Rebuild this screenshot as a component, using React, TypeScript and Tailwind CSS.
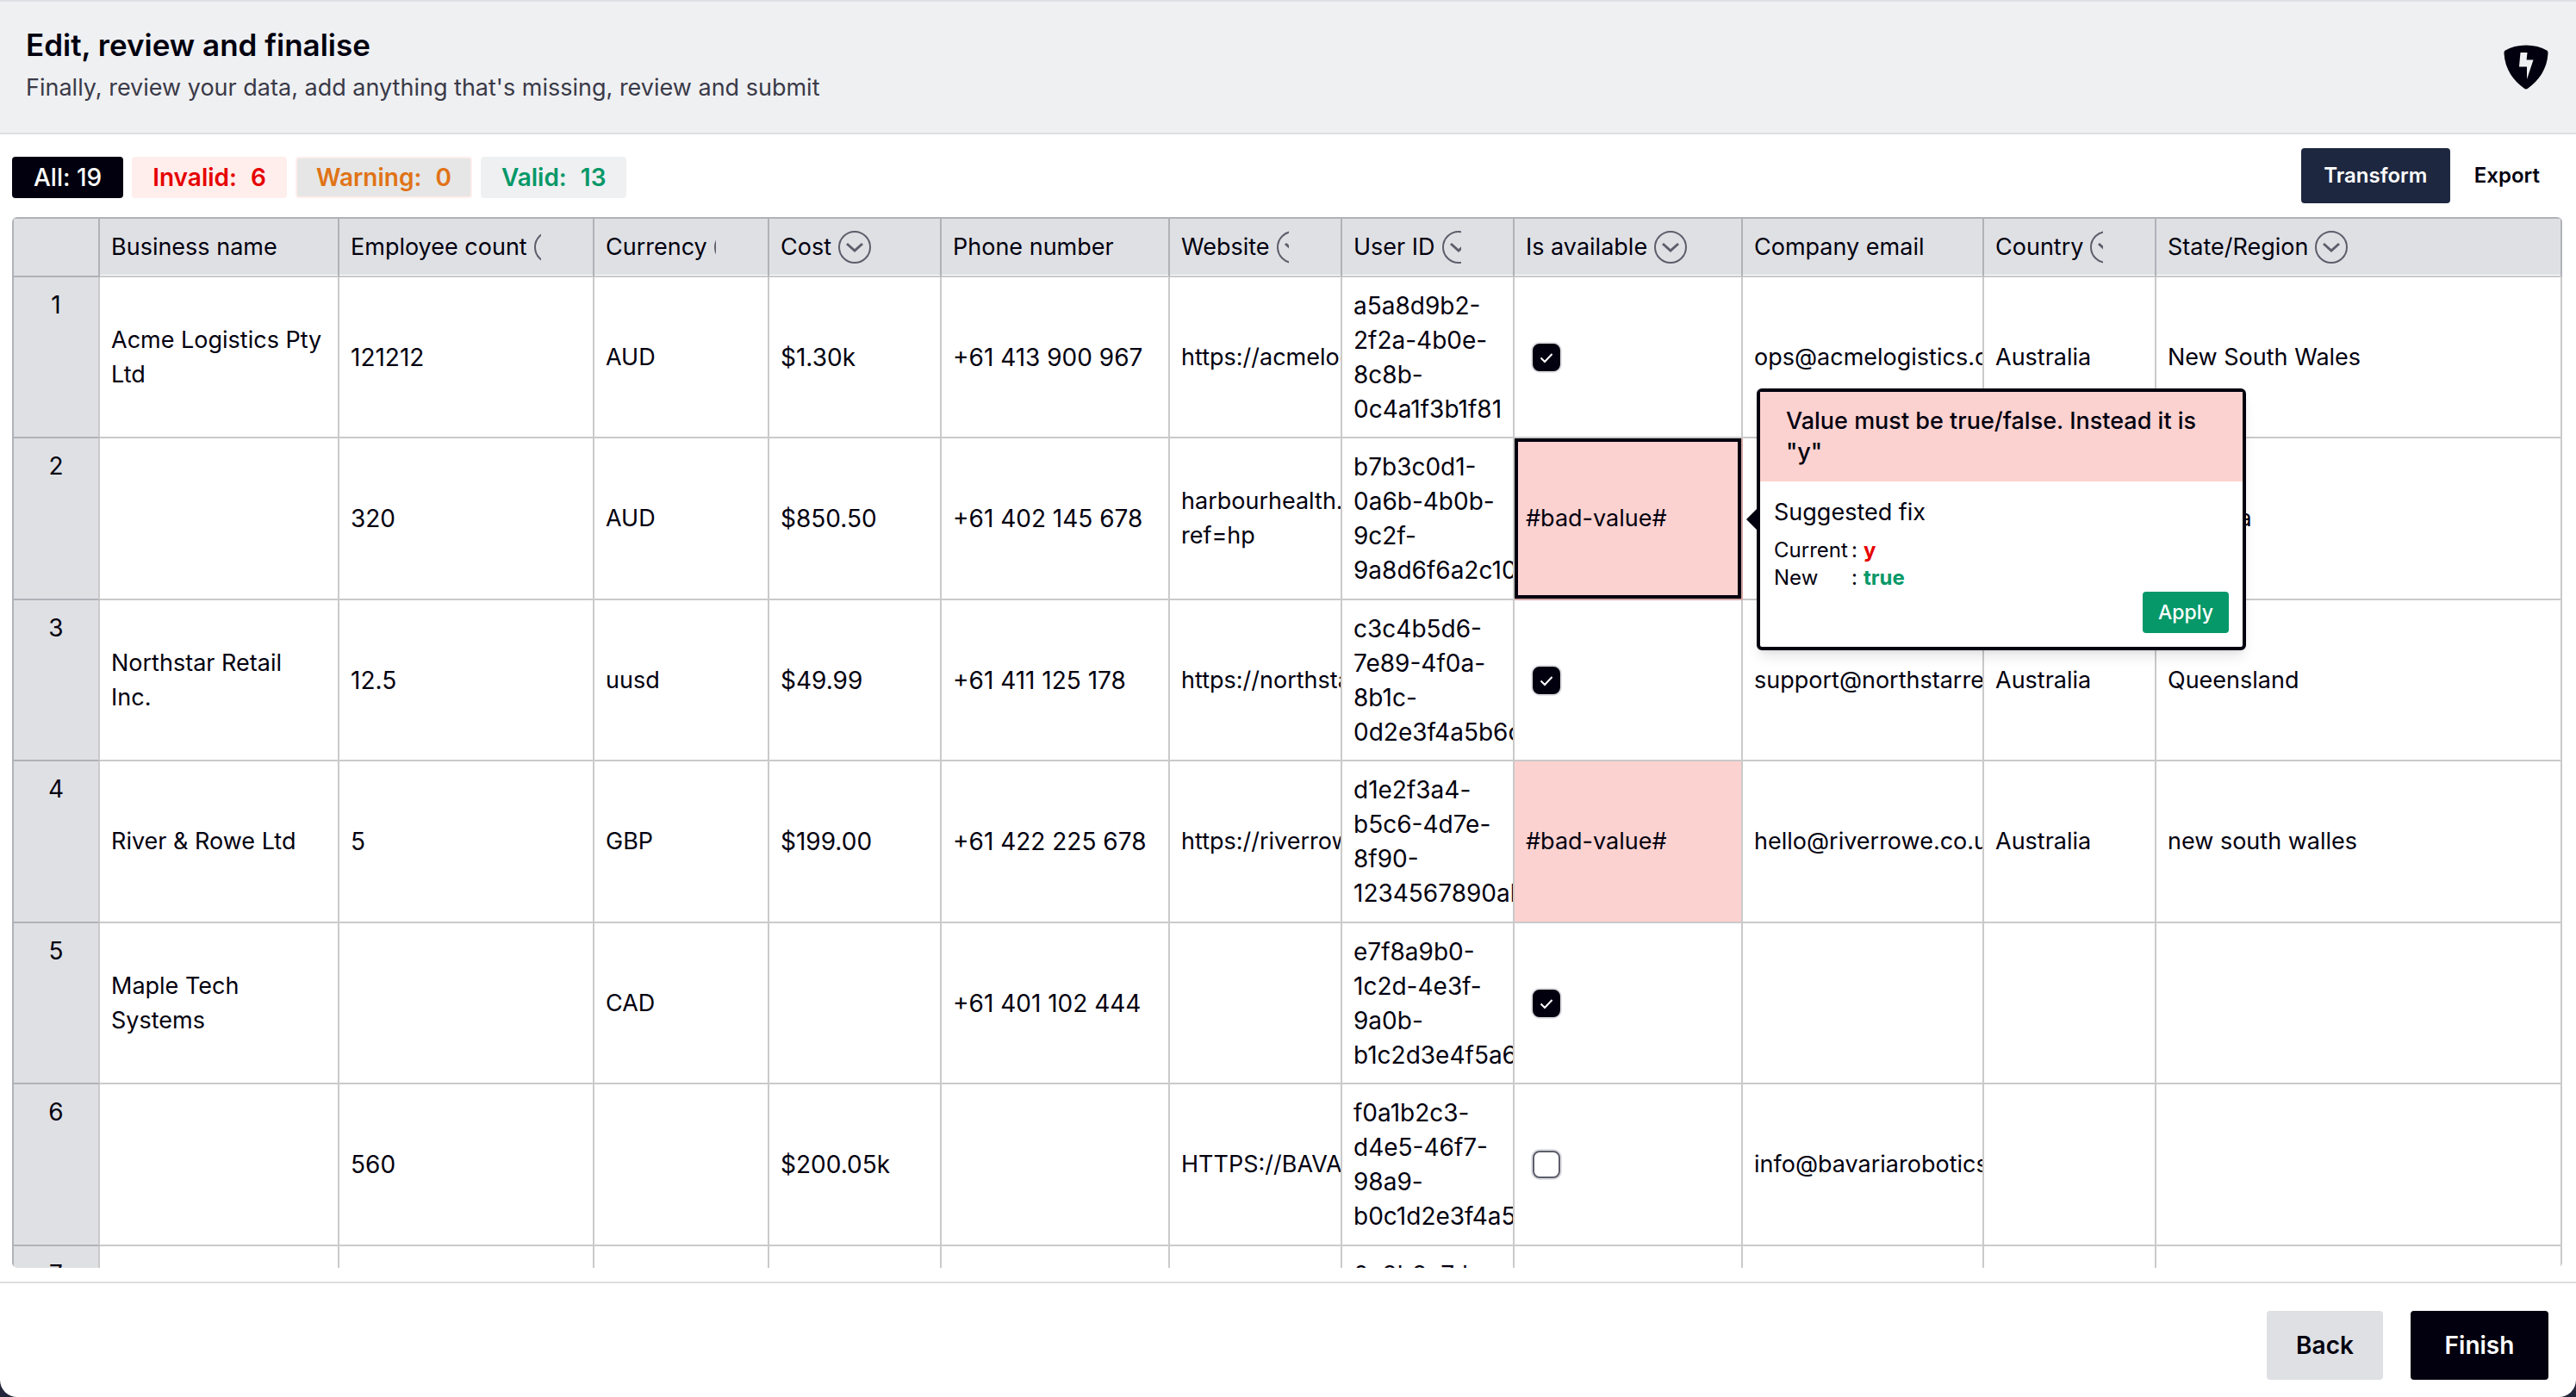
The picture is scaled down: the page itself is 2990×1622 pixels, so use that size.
import React from "react";

type Cell = string | boolean | null;

const columns = [
  { label: "Business name", menu: false, width: "w-[278px]", text: "text-[27px]" },
  { label: "Employee count", menu: true, width: "w-[296px]", text: "text-[28px]" },
  { label: "Currency", menu: true, width: "w-[203px]", text: "text-[27px]" },
  { label: "Cost", menu: true, width: "w-[200px]", text: "text-[28px]" },
  { label: "Phone number", menu: false, width: "w-[265px]", text: "text-[28px]" },
  { label: "Website", menu: true, width: "w-[200px]", text: "text-[27px]" },
  { label: "User ID", menu: true, width: "w-[200px]", text: "text-[28px]" },
  { label: "Is available", menu: true, width: "w-[265px]", text: "text-[27px]" },
  { label: "Company email", menu: false, width: "w-[280px]", text: "text-[27px]" },
  { label: "Country", menu: true, width: "w-[200px]", text: "text-[27px]" },
  { label: "State/Region", menu: true, width: "", text: "text-[27px]" },
];

const BAD = "#bad-value#";

const rows: Cell[][] = [
  ["Acme Logistics Pty Ltd", "121212", "AUD", "$1.30k", "+61 413 900 967", "https://acmelogistics.com", "a5a8d9b2-2f2a-4b0e-8c8b-0c4a1f3b1f81", true, "ops@acmelogistics.com", "Australia", "New South Wales"],
  ["", "320", "AUD", "$850.50", "+61 402 145 678", "harbourhealth.com ref=hp", "b7b3c0d1-0a6b-4b0b-9c2f-9a8d6f6a2c10", BAD, "", "", "Victoria"],
  ["Northstar Retail Inc.", "12.5", "uusd", "$49.99", "+61 411 125 178", "https://northstar.com", "c3c4b5d6-7e89-4f0a-8b1c-0d2e3f4a5b6c", true, "support@northstarretail.com", "Australia", "Queensland"],
  ["River & Rowe Ltd", "5", "GBP", "$199.00", "+61 422 225 678", "https://riverrowe.co.uk", "d1e2f3a4-b5c6-4d7e-8f90-1234567890ab", BAD, "hello@riverrowe.co.uk", "Australia", "new south walles"],
  ["Maple Tech Systems", "", "CAD", "", "+61 401 102 444", "", "e7f8a9b0-1c2d-4e3f-9a0b-b1c2d3e4f5a6", true, "", "", ""],
  ["", "560", "", "$200.05k", "", "HTTPS://BAVARIA.DE", "f0a1b2c3-d4e5-46f7-98a9-b0c1d2e3f4a5", false, "info@bavariarobotics.de", "", ""],
  ["", "", "", "", "", "", "0a9b8c7d-6e5f-4a3b-2c1d-0e9f8a7b6c5d", null, "", "", ""],
];

// row / column of the cell that has its popover open
const selected = { row: 1, col: 7 };

const ShieldLogo: React.FC = () => (
  <svg viewBox="0 0 52 52" className="mt-6 size-13" aria-label="Logo">
    <path
      fill="#02000f"
      d="M1.500 6.800Q12 .500 26 .500T50.500 6.800Q51.700 7.500 51.500 10C50.500 28 41 41.500 28 50.800Q26 52 24 50.800C11 41.500 1.500 28 .500 10Q.300 7.500 1.500 6.800Z"
    />
    <path fill="#eff0f2" d="M19.500 9h8L26.600 17.500H34.500L27 40V25.500H18z" />
  </svg>
);

const MenuIcon: React.FC = () => (
  <svg viewBox="0 0 38 38" fill="none" stroke="#5d5d6b" className="size-[38px]">
    <circle cx="19" cy="19" r="18" strokeWidth="2" />
    <path d="M10 15l9 8 9-8" strokeWidth="3" />
  </svg>
);

const FixPopover: React.FC = () => (
  <div className="absolute left-full -top-[58px] z-10 ml-[18px] w-[568px] rounded-md border-4 border-[#02000f] bg-white shadow-lg">
    <svg viewBox="0 0 13 26" className="absolute -left-4 top-[135px] h-[26px] w-[13px]">
      <path d="M13 0L0 13l13 13z" fill="#02000f" />
    </svg>
    <p className="bg-[#fcd2d0] py-4 pr-8 pl-[30px] text-[27px] leading-9 font-medium">
      Value must be true/false. Instead it is "y"
    </p>
    <div className="p-4">
      <h2 className="text-[27px] leading-10">Suggested fix</h2>
      <dl className="mt-2 grid grid-cols-[90px_14px_1fr] text-2xl leading-8">
        <dt>Current</dt>
        <dd>:</dd>
        <dd className="font-bold text-[#e60000]">y</dd>
        <dt>New</dt>
        <dd>:</dd>
        <dd className="font-bold text-[#069868]">true</dd>
      </dl>
      <div className="flex justify-end">
        <button className="h-12 w-[100px] rounded bg-[#069868] text-[23px] font-medium text-white">
          Apply
        </button>
      </div>
    </div>
  </div>
);

const Checkbox: React.FC<{ checked: boolean; label: string }> = ({ checked, label }) => (
  <span className="relative my-1 ml-2 block size-8">
    <input
      type="checkbox"
      defaultChecked={checked}
      aria-label={label}
      className="peer block size-8 appearance-none rounded-lg border-2 border-[#5d5d6b] bg-white ring-2 ring-[#dfe0e4] checked:border-[#02000f] checked:bg-[#02000f]"
    />
    <svg
      viewBox="0 0 32 32"
      fill="none"
      stroke="white"
      strokeWidth="2"
      className="pointer-events-none absolute inset-0 hidden peer-checked:block"
    >
      <path d="M9.500 16.500l4.500 4.500L22.500 12" />
    </svg>
  </span>
);

const App: React.FC = () => {
  return (
    <div className="h-screen bg-[#23263a]">
      <div className="flex h-full flex-col overflow-hidden rounded-b-[20px] bg-white font-[Inter,sans-serif] text-[#02000f]">
        <header className="flex items-start justify-between border-y-2 border-[#dfe0e4] bg-[#eff0f2] pt-[26px] pr-8 pb-8 pl-[30px]">
          <div>
            <h1 className="text-[35px] leading-12 font-semibold">Edit, review and finalise</h1>
            <p className="mt-[6px] text-[27px] leading-10 text-[#3a3a48]">
              Finally, review your data, add anything that's missing, review and submit
            </p>
          </div>
          <ShieldLogo />
        </header>

        <div className="flex items-start justify-between px-[14px] py-4">
          <div className="flex gap-[10px] pt-[10px] text-[28px] font-semibold">
            <button className="h-12 rounded bg-[#02000f] px-[25px] font-medium text-white">All: 19</button>
            <button className="flex h-12 items-center gap-4 rounded bg-[#ffeeeb] px-6 text-[#e60000]">
              <span>Invalid:</span>
              <span>6</span>
            </button>
            <button className="flex h-12 items-center gap-4 rounded border-2 border-[#ffeeeb] bg-[#e6e6e6] px-[22px] text-[#e07316]">
              <span>Warning:</span>
              <span>0</span>
            </button>
            <button className="flex h-12 items-center gap-4 rounded bg-[#eff0f2] px-6 text-[#069868]">
              <span>Valid:</span>
              <span>13</span>
            </button>
          </div>
          <div className="flex text-2xl font-semibold">
            <button className="h-16 w-[173px] rounded bg-[#1d2740] text-white">Transform</button>
            <button className="h-16 px-7">Export</button>
          </div>
        </div>

        <main className="mr-4 ml-[14px] min-h-0 flex-1 overflow-hidden rounded-md">
          <table className="w-full table-fixed border-separate border-spacing-0 border-t-2 border-l-2 border-[#b1b2b8] leading-10">
            <thead className="text-[27px]">
              <tr className="h-17 bg-[#dfe0e4]">
                <th className="w-[100px] border-r-2 border-b-2 border-[#b1b2b8]" />
                {columns.map((col) => (
                  <th
                    key={col.label}
                    className={`${col.width} border-r-2 border-b-2 border-r-[#b1b2b8] border-b-[#cacaca] p-0 text-left font-normal shadow-[inset_0_-1px_#ffffff]`}
                  >
                    <div
                      className={`ml-[13px] flex items-center gap-2 overflow-hidden whitespace-nowrap ${
                        col.menu ? "mr-[60px]" : ""
                      }`}
                    >
                      <span className="shrink-0">{col.label}</span>
                      {col.menu && (
                        <button aria-label={`${col.label} menu`} className="shrink-0">
                          <MenuIcon />
                        </button>
                      )}
                    </div>
                  </th>
                ))}
              </tr>
            </thead>
            <tbody>
              {rows.map((row, i) => (
                <tr key={i} className="odd:h-[187px] even:h-[188px]">
                  <th className="border-r-2 border-b-2 border-r-[#cacaca] border-b-[#b1b2b8] bg-[#dfe0e4] pt-3 align-top text-[28px] font-normal">
                    {i + 1}
                  </th>
                  {row.map((cell, j) => {
                    const isSelected = i === selected.row && j === selected.col;
                    return (
                      <td
                        key={j}
                        className={`border-r-2 border-b-2 p-0 ${columns[j].text} ${
                          cell === BAD ? "bg-[#fcd2d0]" : ""
                        } ${isSelected ? "relative border-[#d4a6a5]" : "border-[#cacaca]"}`}
                      >
                        <div className="overflow-hidden px-[13px]">
                          {typeof cell === "boolean" ? (
                            <Checkbox checked={cell} label={`Is available, row ${i + 1}`} />
                          ) : (
                            cell
                          )}
                        </div>
                        {isSelected && (
                          <>
                            <div className="pointer-events-none absolute inset-0 border-4 border-[#02000f]" />
                            <FixPopover />
                          </>
                        )}
                      </td>
                    );
                  })}
                </tr>
              ))}
            </tbody>
          </table>
        </main>

        <footer className="mt-4 flex justify-end gap-8 border-t-2 border-[#dedede] px-8 pt-8 pb-5 text-[28px] font-semibold">
          <button className="h-20 w-[135px] rounded bg-[#dfe0e4]">Back</button>
          <button className="h-20 w-[160px] rounded bg-[#02000f] text-white">Finish</button>
        </footer>
      </div>
    </div>
  );
};

export default App;
